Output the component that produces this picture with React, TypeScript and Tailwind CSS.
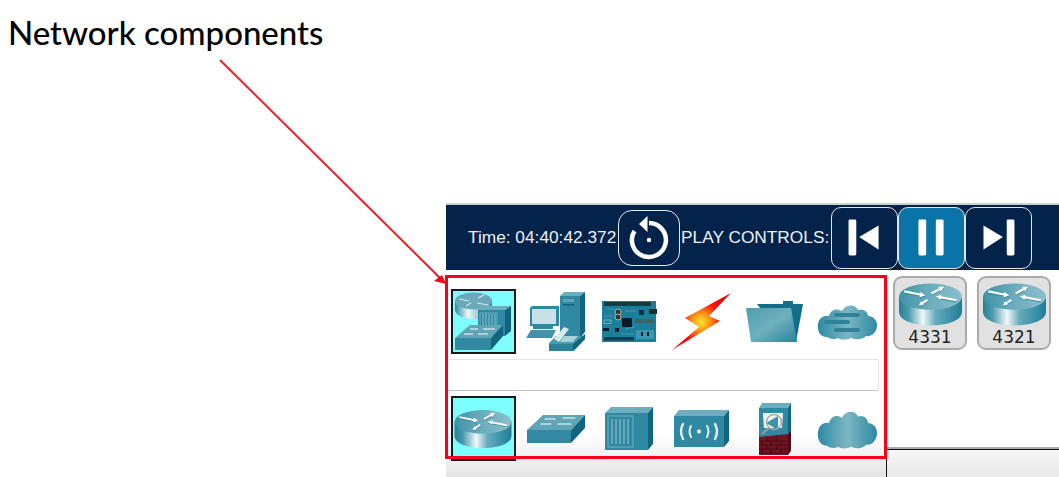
import React from "react";

const Grad = ({ id, stops }: { id: string; stops: [string, string][] }) => (
  <linearGradient id={id} x1="0" y1="0" x2="1" y2="0">
    {stops.map(([o, c]) => (
      <stop key={o} offset={o} stopColor={c} />
    ))}
  </linearGradient>
);

// four arrows on top of a router, lines + heads
const arrowLines = "M5 7.5 L21 10.7 M31 9.5 L39 5.2 M55 16 L39 13 M27 15.5 L22 19";
const arrowHeads = "M25 11.5 L19.5 13 L20.5 8 Z M43 3 L39.8 7.6 L37.4 3.2 Z M35 12.3 L40.5 10.8 L39.5 15.6 Z M19 21 L23.5 20.4 L20.9 16.8 Z";

const RouterArrows = () => (
  <>
    <g transform="translate(0 1)" opacity="0.55">
      <path d={arrowLines} stroke="#1f6f86" strokeWidth="2" fill="none" />
      <path d={arrowHeads} fill="#1f6f86" />
    </g>
    <path d={arrowLines} stroke="#fff" strokeWidth="2" fill="none" />
    <path d={arrowHeads} fill="#fff" />
  </>
);

const Router = ({ id, className }: { id: string; className: string }) => (
  <svg viewBox="0 0 60 40" className={className}>
    <defs>
      <Grad id={id} stops={[["0", "#2b8097"], ["0.15", "#4b9aae"], ["0.38", "#f1f8f9"], ["0.58", "#64abbc"], ["1", "#1f7e97"]]} />
      <Grad id={id + "t"} stops={[["0", "#3f93a8"], ["0.5", "#6cadbd"], ["1", "#8ac0cc"]]} />
    </defs>
    <path d="M0 12.5 V27 C0 35 13 40 30 40 C47 40 60 35 60 27 V12.5 Z" fill={`url(#${id})`} />
    <ellipse cx="30" cy="12.5" rx="30" ry="12.5" fill={`url(#${id}t)`} />
    <RouterArrows />
  </svg>
);

const SwitchBox = ({ className }: { className: string }) => (
  <svg viewBox="0 0 58 28" className={className}>
    <path d="M0 15 L16 0 H58 L44 15 Z" fill="#5fa5b6" />
    <path d="M0 15 H44 V28 H0 Z" fill="#318aa1" />
    <path d="M44 15 L58 0 V13 L44 28 Z" fill="#12657e" />
    <g stroke="#fff" strokeWidth="1.2" strokeLinecap="round">
      <path d="M18 4 H28" />
      <path d="M36 3 H48" />
      <path d="M14 9 H24" />
      <path d="M31 9 H44" />
    </g>
  </svg>
);

const HubBox = ({ className }: { className: string }) => (
  <svg viewBox="0 0 48 43" className={className}>
    <path d="M0 6 L6 0 H48 L43 6 Z" fill="#6caebd" />
    <rect x="0" y="6" width="43" height="37" fill="#2f89a2" />
    <path d="M43 6 L48 0 V37 L43 43 Z" fill="#12657e" />
    <rect x="3" y="9" width="25" height="31" fill="none" stroke="#6fb0c0" strokeWidth="1" />
    <g stroke="#8cc1cd" strokeWidth="1.1">
      <path d="M7 12 V37 M11 12 V37 M15 12 V37 M19 12 V37 M23 12 V37" />
    </g>
  </svg>
);

const WirelessBox = ({ className }: { className: string }) => (
  <svg viewBox="0 0 55 37" className={className}>
    <path d="M0 6 L5 0 H55 L50 6 Z" fill="#6caebd" />
    <rect x="0" y="6" width="50" height="31" fill="#2f89a2" />
    <path d="M50 6 L55 0 V31 L50 37 Z" fill="#12657e" />
    <g fill="none" stroke="#e4f1f4" strokeLinecap="round">
      <path d="M9 14 Q5 21 9 29" strokeWidth="2.4" />
      <path d="M17 16 Q14 21 17 27" strokeWidth="2" />
      <path d="M33 16 Q36 21 33 27" strokeWidth="2" />
      <path d="M41 14 Q45 21 41 29" strokeWidth="2.4" />
    </g>
    <circle cx="25" cy="21.5" r="2" fill="#fff" />
  </svg>
);

const Firewall = ({ className }: { className: string }) => (
  <svg viewBox="0 0 32 52" className={className}>
    <path d="M0 5 L3 0 H32 L29 5 Z" fill="#6caebd" />
    <rect x="0" y="5" width="29" height="30" fill="#2f89a2" />
    <path d="M29 5 L32 0 V30 L29 35 Z" fill="#12657e" />
    <path d="M4 10 H24 L23 25 H5 Z" fill="#f2f8fa" />
    <path d="M7 20 L19 13 V27 Z" fill="#3d93aa" />
    <circle cx="15" cy="19" r="7.5" fill="none" stroke="#a9a9a9" strokeWidth="1.6" />
    <path d="M10 25 L3 31" stroke="#9a9a9a" strokeWidth="2.2" />
    <path d="M0 34 L29 31 V52 H0 Z" fill="#741221" />
    <path d="M29 31 L32 28 V48 L29 52 Z" fill="#4e0c16" />
    <g stroke="#3b0a10" strokeWidth="0.8">
      <path d="M0 38 H29 M0 42 H29 M0 46 H29 M0 50 H29" />
      <path d="M8 33 V38 M18 32 V38 M3 38 V42 M12 38 V42 M22 38 V42 M8 42 V46 M18 42 V46 M3 46 V50 M12 46 V50 M22 46 V50" />
    </g>
  </svg>
);

const cloudPath =
  "M10 34 C2 34 0 26 1 21 C2 15 7 12 12 13 C14 6 20 5 25 8 C29 1 38 1 41 7 C46 5 51 9 51 13 C56 13 60 17 60 22 C60 29 55 34 49 33 C45 37 38 37 34 35 C30 37 24 37 21 35 C18 37 13 36 10 34 Z";

const Cloud = ({ id, className, bars }: { id: string; className: string; bars?: boolean }) => (
  <svg viewBox="0 0 60 37" preserveAspectRatio="none" className={className}>
    <defs>
      <Grad id={id} stops={[["0", "#2d89a2"], ["0.5", "#7cb6c4"], ["1", "#2d89a2"]]} />
    </defs>
    <path d={cloudPath} fill={`url(#${id})`} />
    {bars && (
      <g fill="#2f8299">
        <rect x="17" y="10" width="26" height="4" rx="2" />
        <rect x="7" y="17" width="26" height="4" rx="2" />
        <rect x="17" y="25" width="26" height="4" rx="2" />
      </g>
    )}
  </svg>
);

const EndDevices = ({ className }: { className: string }) => (
  <svg viewBox="0 0 60 59" className={className}>
    <path d="M34 4 L38 0 H59 L54 4 Z" fill="#6caebd" />
    <rect x="34" y="4" width="20" height="42" fill="#2f89a2" />
    <path d="M54 4 L59 0 V40 L54 46 Z" fill="#12657e" />
    <rect x="37" y="7" width="11" height="3" fill="#5fa5b6" />
    <rect x="37" y="12" width="11" height="1.5" fill="#12657e" />
    <path d="M4 16 L6 14 H33 V34 H4 Z" fill="#2f89a2" />
    <rect x="6" y="17" width="24" height="15" fill="#c8e0e8" />
    <rect x="7" y="34" width="20" height="3" fill="#2f89a2" />
    <path d="M0 46 L5 38 H30 L26 46 Z" fill="#3f94aa" />
    <path d="M23 51 L30 44 H59 V47 L48 59 H23 Z" fill="#4a9bb0" />
    <path d="M23 52 H47 V59 H23 Z" fill="#2a8299" />
    <path d="M47 59 L59 47 V42 L47 52 Z" fill="#12657e" />
    <path d="M28 47 L38 35 L43 37 L33 50 Z" fill="#d4e8ed" />
    <path d="M38 44 H52 L47 50 H34 Z" fill="#a9d1da" />
  </svg>
);

const Board = ({ className }: { className: string }) => (
  <svg viewBox="0 0 56 41" className={className}>
    <rect x="1" width="54" height="41" fill="#1a7f99" />
    <rect x="3" y="1" width="47" height="4" fill="#143c4a" />
    <rect x="3" y="36" width="30" height="3.5" fill="#143c4a" />
    <rect x="21" y="17" width="10" height="9" fill="#0b1c26" />
    <circle cx="17" cy="11" r="3" fill="#2b3a40" stroke="#c8c8c8" strokeWidth="0.8" />
    <circle cx="17" cy="16" r="3" fill="#2b3a40" stroke="#d8c9a6" strokeWidth="0.8" />
    <rect x="48" y="8" width="8" height="5" fill="#1d2a30" />
    <rect x="38" y="9" width="5" height="5" fill="#12303c" />
    <rect x="34" y="18" width="9" height="4" fill="#4a5e66" />
    <rect x="44" y="18" width="9" height="4" fill="#4a5e66" />
    <rect x="3" y="19" width="7" height="3.5" fill="none" stroke="#8fc1cd" strokeWidth="0.7" />
    <rect x="2" y="27" width="6" height="3" fill="#0b1c26" />
    <rect x="14" y="27" width="4" height="4" fill="#0b1c26" />
    <rect x="35" y="29" width="18" height="9" fill="#3c96ad" />
    <rect x="40" y="31" width="2" height="4" fill="#0b1c26" />
    <rect x="46" y="31" width="2" height="4" fill="#0b1c26" />
    <path d="M6 8 L14 8 M24 10 L34 10 M3 15 L12 15 M24 28 L34 26 M20 33 L33 33" stroke="#5fb0c4" strokeWidth="0.6" />
  </svg>
);

const Bolt = ({ className, id }: { className: string; id: string }) => (
  <svg viewBox="0 0 60 59" className={className}>
    <defs>
      <radialGradient id={id} gradientUnits="userSpaceOnUse" cx="29" cy="30" r="24">
        <stop offset="0" stopColor="#ffe52e" />
        <stop offset="0.35" stopColor="#fd9a17" />
        <stop offset="0.8" stopColor="#fb1a0c" />
        <stop offset="1" stopColor="#fa0008" />
      </radialGradient>
    </defs>
    <path d="M59 1 L13 26 L27 35 L0 58 L48 29 L37 24 Z" fill={`url(#${id})`} />
  </svg>
);

const Folder = ({ className, id }: { className: string; id: string }) => (
  <svg viewBox="0 0 57 42" className={className}>
    <defs>
      <linearGradient id={id} x1="0" y1="0" x2="1" y2="1">
        <stop offset="0" stopColor="#4f9db0" />
        <stop offset="0.5" stopColor="#6fb0bf" />
        <stop offset="1" stopColor="#2a8299" />
      </linearGradient>
    </defs>
    <path d="M11 3 H37 V0 H47 V3 H57 L50 41 H40 Z" fill="#136f88" />
    <path d="M0 7 H45 L51 41 H5 Z" fill={`url(#${id})`} />
  </svg>
);

const CategoryBox = () => (
  <svg viewBox="0 0 61 61" className="h-[61px] w-[61px]">
    <defs>
      <Grad id="catRouter" stops={[["0", "#2f8aa0"], ["0.35", "#eef6f8"], ["1", "#2f8aa0"]]} />
    </defs>
    <path d="M2 10 V19 C2 24 11 28 20 28 C29 28 39 24 39 19 V10 Z" fill="url(#catRouter)" />
    <ellipse cx="20.5" cy="10" rx="18.5" ry="8.5" fill="#6aa9b9" />
    <g stroke="#d5e8ec" strokeWidth="1.2">
      <path d="M6 8 L16 10 M24 12 L35 14 M25 7 L31 4 M13 15 L18 12" />
    </g>
    <path d="M25 19 L29 15 H58 L52 19 Z" fill="#6caebd" />
    <rect x="25" y="19" width="27" height="26" fill="#2f89a2" />
    <path d="M52 19 L58 15 V40 L52 45 Z" fill="#12657e" />
    <rect x="27" y="22" width="17" height="16" fill="none" stroke="#7ab6c5" strokeWidth="0.8" />
    <g stroke="#8cc1cd" strokeWidth="1">
      <path d="M30 23 V37 M33 23 V37 M36 23 V37 M39 23 V37 M42 23 V37" />
    </g>
    <path d="M2 47 L17 34 H50 L38 47 Z" fill="#5fa5b6" />
    <path d="M2 47 H38 V59 H2 Z" fill="#318aa1" />
    <path d="M38 47 L50 34 V45 L38 59 Z" fill="#12657e" />
    <g stroke="#fff" strokeWidth="1.1">
      <path d="M17 38 H25 M30 38 H42 M11 43 H20 M25 43 H35" />
    </g>
  </svg>
);

const IconCell = ({ children }: { children: React.ReactNode }) => (
  <div className="flex h-[65px] w-[72.8px] shrink-0 items-center justify-center">{children}</div>
);

const Selected = ({ children }: { children: React.ReactNode }) => (
  <div className="flex h-[65px] w-[65px] items-center justify-center border-2 border-[#1a1a1a] bg-[#7dffff]">
    {children}
  </div>
);

const CtrlButton = ({ children, active }: { children: React.ReactNode; active?: boolean }) => (
  <div
    className={
      active
        ? "h-[62px] w-[67px] rounded-[10px] border border-[#dfe8ee] bg-[#0a74a8]"
        : "h-[62px] w-[67px] rounded-[10px] border border-[#dfe8ee] bg-[#03234a]"
    }
  >
    {children}
  </div>
);

const DeviceTile = ({ label, id }: { label: string; id: string }) => (
  <div className="flex h-[74px] w-[74px] flex-col items-center rounded-[9px] border-2 border-[#ababab] bg-[#e1e1e1] pt-[4px]">
    <Router id={id} className="h-[45px] w-[63px]" />
    <span className="font-['DejaVu_Sans',sans-serif] text-[17px] leading-[20px] text-[#222]">{label}</span>
  </div>
);

export default function App() {
  return (
    <div className="relative h-[477px] w-[1059px] overflow-hidden bg-white font-['Liberation_Sans',sans-serif]">
      <h1 className="h-[203px] pl-2 pt-[12px] font-['Lato',sans-serif] text-[33px] font-medium leading-[40px] text-black">
        Network components
      </h1>

      <div className="ml-[446px] flex flex-col">
        <div className="h-[2px] bg-[#cfcfcf]" />

        {/* play controls bar */}
        <div className="flex h-[65px] items-center bg-[#03234a] text-[17.3px] text-[#eef2f6]">
          <span className="ml-[22px] w-[150px] whitespace-nowrap">Time: 04:40:42.372</span>
          <div className="h-[56px] w-[62px] rounded-[14px] border border-[#e6edf2]">
            <svg viewBox="0 0 60 54" className="h-full w-full">
              <path d="M30 12 A17 17 0 1 1 15.5 20" fill="none" stroke="#fff" strokeWidth="4.5" />
              <path d="M20 13 L28.5 5 V21 Z" fill="#fff" />
              <circle cx="30" cy="29" r="2.2" fill="#fff" />
            </svg>
          </div>
          <span className="ml-[1px] w-[150px] whitespace-nowrap">PLAY CONTROLS:</span>
          <div className="flex">
            <CtrlButton>
              <svg viewBox="0 0 67 62" className="h-full w-full">
                <rect x="17" y="12" width="8" height="37" rx="1.5" fill="#fff" />
                <path d="M28 30 L48 18 V43 Z" fill="#fff" />
              </svg>
            </CtrlButton>
            <CtrlButton active>
              <svg viewBox="0 0 67 62" className="h-full w-full">
                <rect x="20" y="12" width="8" height="37" rx="1.5" fill="#fff" />
                <rect x="38" y="12" width="8" height="37" rx="1.5" fill="#fff" />
              </svg>
            </CtrlButton>
            <CtrlButton>
              <svg viewBox="0 0 67 62" className="h-full w-full">
                <path d="M18 18 L38 30 L18 43 Z" fill="#fff" />
                <rect x="42" y="12" width="8" height="37" rx="1.5" fill="#fff" />
              </svg>
            </CtrlButton>
          </div>
        </div>

        <div className="flex h-[207px]">
          {/* device picker */}
          <div className="flex w-[440px] shrink-0 flex-col">
            <div className="flex h-[89px] items-start pl-[1px] pt-[19px]">
              <IconCell>
                <Selected>
                  <CategoryBox />
                </Selected>
              </IconCell>
              <IconCell>
                <EndDevices className="h-[59px] w-[60px]" />
              </IconCell>
              <IconCell>
                <Board className="h-[41px] w-[56px]" />
              </IconCell>
              <IconCell>
                <Bolt id="bolt" className="h-[59px] w-[60px]" />
              </IconCell>
              <IconCell>
                <Folder id="folder" className="h-[42px] w-[57px]" />
              </IconCell>
              <IconCell>
                <Cloud id="cloudA" bars className="h-[37px] w-[60px]" />
              </IconCell>
            </div>
            <div className="h-[32px] w-[433px] rounded-r-[2px] border-y border-r border-[#e4e4e4] border-b-[#c2c2c2] bg-white" />
            <div className="flex flex-1 items-start bg-gradient-to-b from-white via-white via-[50%] to-[#e4e4e4] pl-[1px] pt-[5px]">
              <IconCell>
                <Selected>
                  <Router id="routerSel" className="h-[38px] w-[58px]" />
                </Selected>
              </IconCell>
              <IconCell>
                <SwitchBox className="h-[28px] w-[58px]" />
              </IconCell>
              <IconCell>
                <HubBox className="h-[43px] w-[48px]" />
              </IconCell>
              <IconCell>
                <WirelessBox className="h-[37px] w-[55px]" />
              </IconCell>
              <IconCell>
                <Firewall className="h-[52px] w-[32px]" />
              </IconCell>
              <IconCell>
                <Cloud id="cloudB" className="h-[40px] w-[60px]" />
              </IconCell>
            </div>
          </div>

          {/* model list and workspace edge */}
          <div className="flex flex-1 flex-col">
            <div className="flex flex-1 gap-[10px] pl-[7px] pt-[6px]">
              <DeviceTile label="4331" id="r4331" />
              <DeviceTile label="4321" id="r4321" />
            </div>
            <div className="h-[2px] bg-[#ababab]" />
            <div className="h-[28px] border-l border-t border-[#111] bg-gradient-to-b from-[#f6f6f6] to-[#e8e8e8]" />
          </div>
        </div>
      </div>

      {/* annotation over the screenshot */}
      <div className="pointer-events-none absolute left-[445px] top-[275px] h-[184px] w-[442px] border-[3px] border-[#fa0019]" />
      <svg className="pointer-events-none absolute left-0 top-0 h-[477px] w-[1059px]" viewBox="0 0 1059 477">
        <path d="M220 60 L440 278" stroke="#ee1c25" strokeWidth="2" fill="none" />
        <path d="M446 284 L434 281 L442 275 Z" fill="#fa0019" />
      </svg>
    </div>
  );
}
